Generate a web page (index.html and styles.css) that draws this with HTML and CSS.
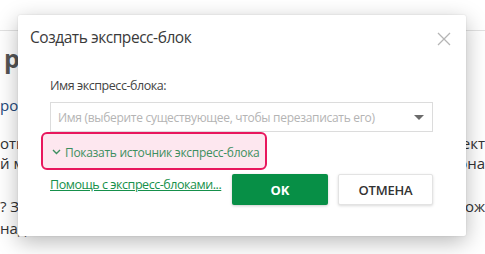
FILE: index.html
```html
<!DOCTYPE html>
<html lang="ru">
<head>
<meta charset="UTF-8" />
<meta name="viewport" content="width=device-width, initial-scale=1" />
<title>Создать экспресс-блок</title>
<link rel="stylesheet" href="styles.css">
</head>
<body>
  <div class="page">
    <div class="topbar"></div>
    <div class="heading">р</div>
    <div class="line line-1"><span class="link-text">ро</span><span></span></div>
    <div class="line line-2"><span>оти</span><span>ект</span></div>
    <div class="line line-3"><span>й м</span><span>она</span></div>
    <div class="line line-4"><span>? З</span><span>ож</span></div>
    <div class="line line-5"><span>над</span><span></span></div>
  </div>

  <div class="dialog">
    <div class="dialog-head">
      <div class="dialog-title">Создать экспресс-блок</div>
      <button class="close-btn" aria-label="Закрыть">
        <svg width="14" height="14" viewBox="0 0 14 14"><path d="M1 1L13 13M13 1L1 13" stroke="#b5b5b5" stroke-width="1.3" fill="none"/></svg>
      </button>
    </div>
    <div class="dialog-body">
      <label class="field-label">Имя экспресс-блока:</label>
      <div class="select">
        <span class="placeholder">Имя (выберите существующее, чтобы перезаписать его)</span>
        <svg class="caret" width="10" height="6" viewBox="0 0 10 6"><path d="M0 0H10L5 5Z" fill="#6b6b6b"/></svg>
      </div>
      <div class="toggle">
        <svg width="9" height="6" viewBox="0 0 9 6"><path d="M1 1L4.5 4.5L8 1" stroke="#3d8f60" stroke-width="1.4" fill="none"/></svg>
        <span>Показать источник экспресс-блока</span>
      </div>
      <div class="actions">
        <a class="help-link" href="#">Помощь с экспресс-блоками...</a>
        <div class="btn-group">
          <button class="btn btn-ok">OK</button>
          <button class="btn btn-cancel">ОТМЕНА</button>
        </div>
      </div>
    </div>
  </div>
</body>
</html>
```

FILE: styles.css
```css
body {
  margin: 0;
  font-family: 'Open Sans', 'Noto Sans', sans-serif;
  background: #fff;
  color: #333;
  width: 485px;
  height: 254px;
  overflow: hidden;
  position: relative;
  white-space: nowrap;
}
.page {
  font-size: 15px;
}
.topbar {
  height: 30px;
  border-bottom: 1px solid #e2e2e2;
}
.heading {
  font-size: 25px;
  font-weight: 700;
  color: #555;
  line-height: 30px;
  padding: 12px 0 0 4px;
}
.line {
  display: flex;
  justify-content: space-between;
  line-height: 20px;
}
.line-1 { margin-top: 22px; }
.line-2 { margin-top: 18px; }
.line-3 { margin-top: 0; }
.line-4 { margin-top: 23px; }
.line-5 { margin-top: 2px; }
.link-text {
  color: #24487a;
}
.dialog {
  position: absolute;
  left: 18px;
  top: 15px;
  width: 448px;
  height: 221px;
  background: #fff;
  border-radius: 2px;
  box-shadow: 0 6px 22px rgba(0,0,0,0.28), 0 0 2px rgba(0,0,0,0.12);
}
.dialog-head {
  display: flex;
  justify-content: space-between;
  align-items: flex-start;
  padding: 11px 15px 0 12px;
}
.dialog-title {
  font-size: 15.5px;
  letter-spacing: -0.45px;
  line-height: 22px;
  color: #3a3a3a;
}
.close-btn {
  border: none;
  background: none;
  padding: 0;
  margin-top: 6px;
  cursor: pointer;
}
.dialog-body {
  padding: 28px 33px 0 32px;
}
.field-label {
  display: block;
  font-size: 12.5px;
  letter-spacing: -0.45px;
  line-height: 18px;
  color: #444;
}
.select {
  margin-top: 7px;
  height: 30px;
  box-sizing: border-box;
  border: 1px solid #dcdcdc;
  display: flex;
  align-items: center;
  justify-content: space-between;
  padding: 0 8px 0 7px;
}
.placeholder {
  font-size: 12px;
  letter-spacing: -0.3px;
  color: #b4b4b4;
}
.caret {
  margin-top: 1px;
}
.toggle {
  margin-left: -9px;
  width: 226px;
  height: 38px;
  box-sizing: border-box;
  border: 2px solid #e8175d;
  border-radius: 6px;
  background: #fde7ef;
  display: flex;
  align-items: center;
  gap: 4px;
  padding: 2px 0 0 9px;
  font-size: 12px;
  letter-spacing: -0.3px;
  color: #3d8f60;
}
.actions {
  display: flex;
  justify-content: space-between;
  align-items: flex-start;
  margin-top: 4px;
}
.help-link {
  font-size: 12.5px;
  letter-spacing: -0.45px;
  color: #16904b;
  margin-top: 2px;
}
.btn-group {
  display: flex;
  gap: 10px;
}
.btn {
  width: 96px;
  height: 31px;
  border-radius: 2px;
  font-family: 'Open Sans', sans-serif;
  font-size: 13px;
  cursor: pointer;
}
.btn-ok {
  background: #078f46;
  border: none;
  color: #fff;
  font-weight: 700;
  box-shadow: 0 1px 3px rgba(0,0,0,0.2);
}
.btn-cancel {
  width: 95px;
  background: #fff;
  border: 1px solid #e3e3e3;
  color: #333;
  font-weight: 600;
  letter-spacing: -0.2px;
  box-shadow: 0 1px 3px rgba(0,0,0,0.15);
}
```
